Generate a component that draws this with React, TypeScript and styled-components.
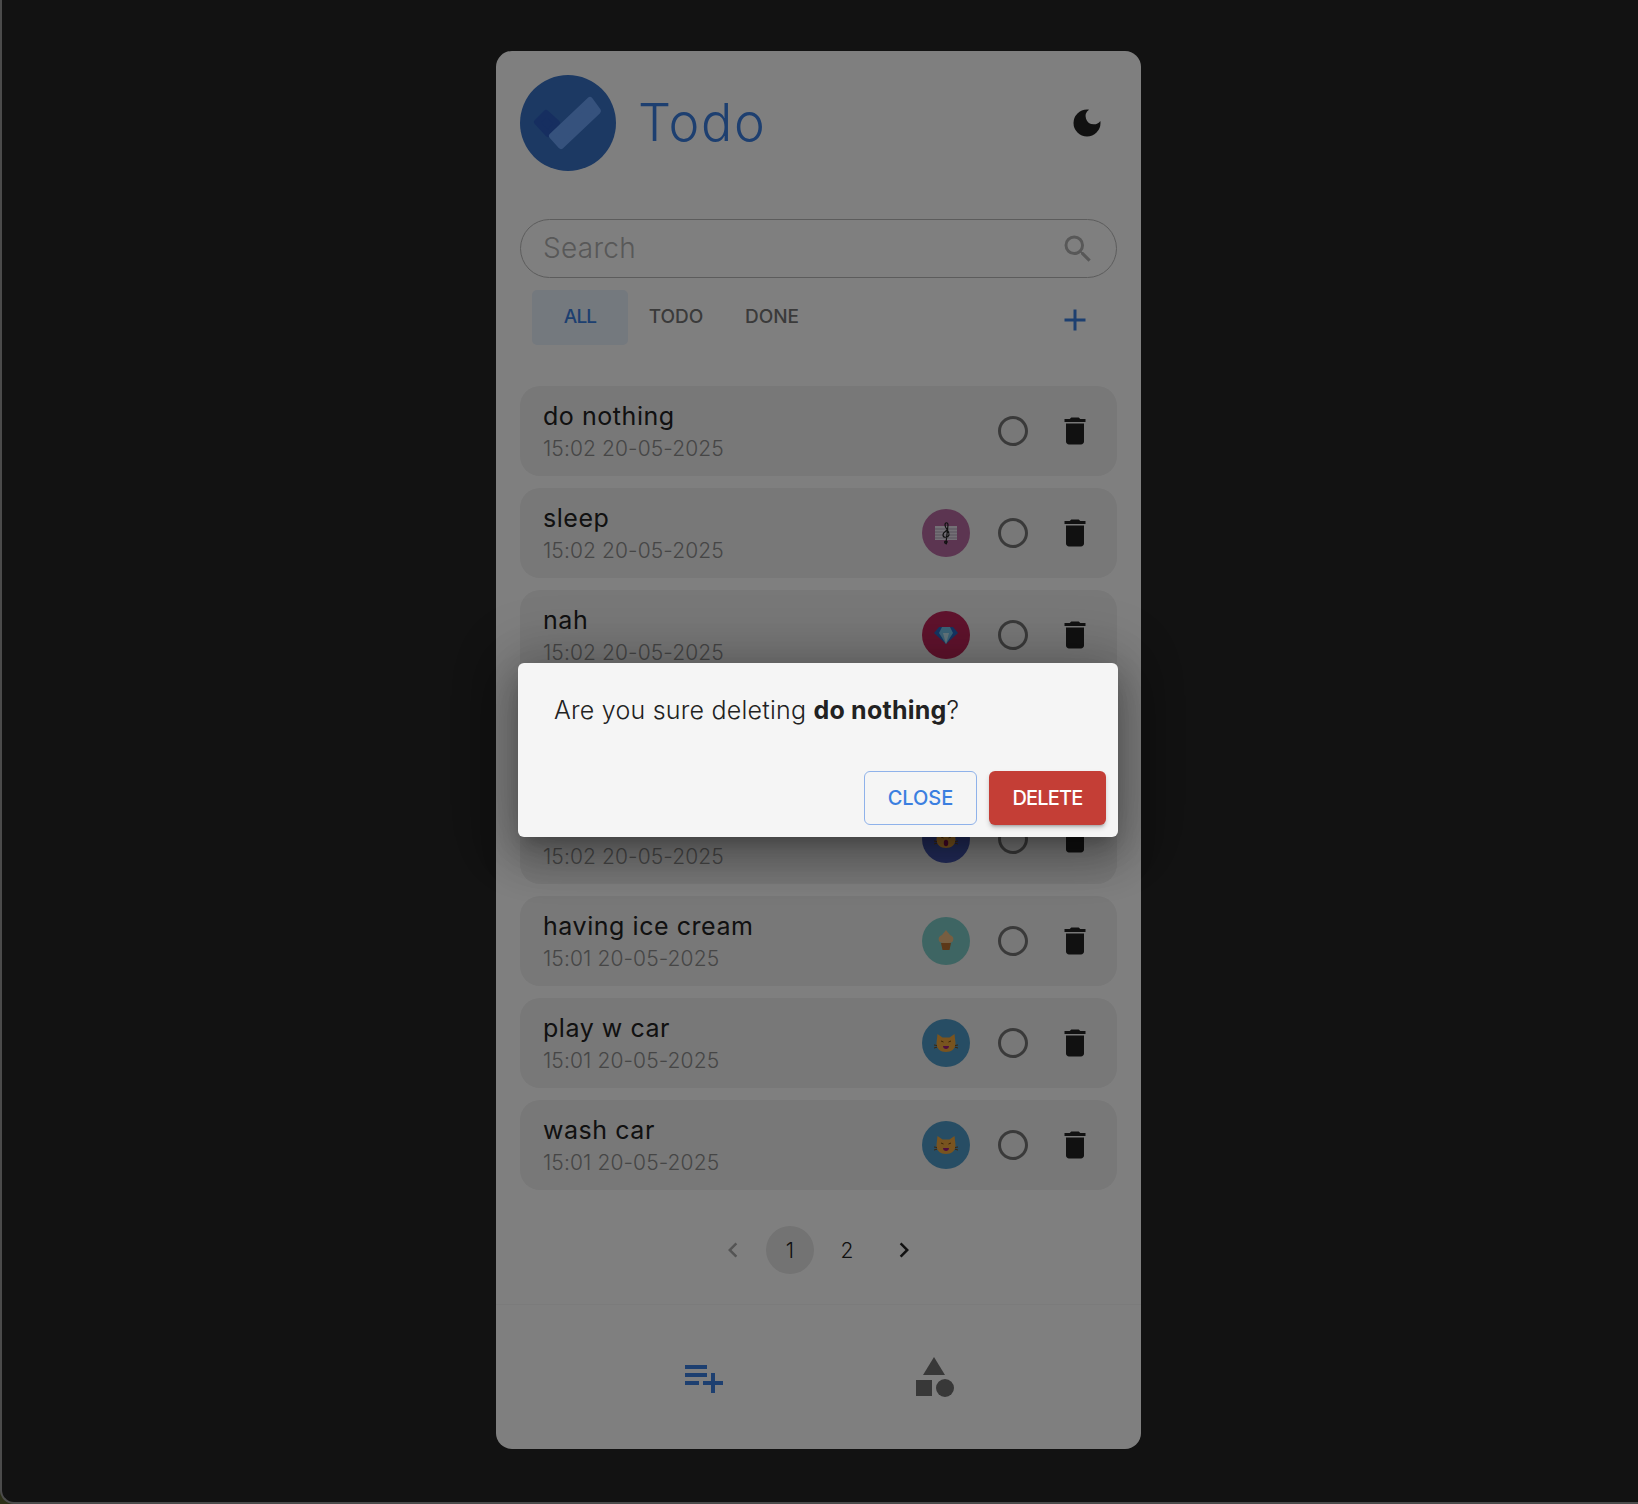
import React from 'react'
import styled, { createGlobalStyle } from 'styled-components'
import {
	MdAdd,
	MdCategory,
	MdChevronLeft,
	MdChevronRight,
	MdDarkMode,
	MdDelete,
	MdPlaylistAdd,
	MdRadioButtonUnchecked,
	MdSearch,
} from 'react-icons/md'

const PRIMARY = '#3b7fe0'

const GlobalStyle = createGlobalStyle`
	* {
		box-sizing: border-box;
	}

	body {
		margin: 0;
		background: #242424;
		font-family: Inter, "Open Sans", sans-serif;
	}
`

const Page = styled.div`
	position: relative;

	width: 1638px;
	height: 1504px;
	padding: 51px 1px 0 0;

	overflow: hidden;
	background: #5a6030;
`

const Desktop = styled.div`
	position: absolute;
	inset: 0;

	border-left: 2px solid #979797;
	border-bottom: 2px solid #979797;
	border-bottom-left-radius: 14px;

	background: #242424;
`

const Card = styled.main`
	position: relative;

	width: 645px;
	height: 1398px;
	margin: 0 auto;
	padding: 24px 24px 0;

	border-radius: 16px;

	display: flex;
	flex-direction: column;

	background: #fff;
`

const Header = styled.header`
	display: flex;
	align-items: center;
	gap: 22px;
`

const LogoMark = styled.svg`
	width: 96px;
	height: 96px;
	flex-shrink: 0;
`

const Title = styled.h1`
	margin: 0;
	flex: 1;

	font-size: 52px;
	font-weight: 350;
	line-height: 60px;
	letter-spacing: 1.6px;
	color: ${PRIMARY};
`

const IconButton = styled.button<{ $color?: string; $size?: number }>`
	width: ${props => props.$size ?? 36}px;
	height: ${props => props.$size ?? 36}px;
	padding: 0;
	border: none;
	flex-shrink: 0;

	display: flex;
	justify-content: center;
	align-items: center;

	background: none;
	color: ${props => props.$color ?? '#222'};
	font-size: 36px;
`

const ThemeToggle = styled(IconButton)`
	margin-right: 12px;
`

const SearchBox = styled.div`
	height: 59px;
	margin-top: 48px;
	padding: 0 20px 0 22px;

	border: 1.5px solid #b8b8b8;
	border-radius: 30px;

	display: flex;
	align-items: center;
`

const SearchText = styled.span`
	flex: 1;
	padding-bottom: 2px;

	font-size: 28px;
	font-weight: 300;
	letter-spacing: 0.3px;
	color: #b0b0b0;
`

const TabRow = styled.div`
	height: 55px;
	margin: 12px 24px 0 12px;

	display: flex;
	align-items: center;
`

const Tab = styled.div<{ $active?: boolean }>`
	width: 96px;
	height: 55px;

	border-radius: 5px;

	display: flex;
	justify-content: center;
	align-items: center;
	padding-bottom: 3px;

	font-size: 19px;
	font-weight: 500;
	letter-spacing: ${props => (props.$active ? '-0.8px' : '0')};
	background: ${props => (props.$active ? '#e9f2fd' : 'none')};
	color: ${props => (props.$active ? PRIMARY : '#757575')};
`

const TabAdd = styled(IconButton)`
	margin-left: auto;
	margin-top: 5px;
`

const List = styled.ul`
	margin: 41px 0 0;
	padding: 0;

	display: flex;
	flex-direction: column;
	gap: 12px;

	list-style: none;
`

const Row = styled.li`
	height: 90px;
	padding: 0 24px 0 23px;

	border-radius: 20px;

	display: flex;
	align-items: center;

	background: #f0f0f0;
`

const RowText = styled.div`
	flex: 1;
	padding-top: 2px;
`

const RowTitle = styled.div`
	height: 32px;

	font-size: 25px;
	font-weight: 400;
	line-height: 32px;
	letter-spacing: 0.55px;
	color: #222;
`

const RowDate = styled.div`
	height: 32px;
	padding-top: 1px;

	font-size: 21px;
	font-weight: 300;
	line-height: 31px;
	letter-spacing: 0.1px;
	color: #8c8c8c;
`

const Avatar = styled.div<{ $color: string }>`
	width: 48px;
	height: 48px;
	margin-right: 25px;

	border-radius: 50%;

	display: flex;
	justify-content: center;
	align-items: center;

	background: ${props => props.$color};
`

const RowAction = styled(IconButton)`
	& + & {
		margin-left: 26px;
	}
`

const Pagination = styled.nav`
	margin-top: 36px;

	display: flex;
	justify-content: center;
	gap: 9px;
`

const PageItem = styled.div<{ $active?: boolean; $muted?: boolean }>`
	width: 48px;
	height: 48px;

	border-radius: 50%;

	display: flex;
	justify-content: center;
	align-items: center;

	font-size: 21px;
	font-weight: 300;
	background: ${props => (props.$active ? '#e6e6e6' : 'none')};
	color: ${props => (props.$muted ? '#a8a8a8' : '#222')};
`

const BottomNav = styled.footer`
	height: 97px;
	margin: 30px -24px 0;
	padding-top: 48px;

	border-top: 1px solid #f6f6f6;

	display: flex;
	justify-content: center;
`

const BottomNavItem = styled.div<{ $color: string }>`
	width: 231px;

	display: flex;
	justify-content: center;

	font-size: 48px;
	line-height: 0;
	color: ${props => props.$color};
`

const Backdrop = styled.div`
	position: absolute;
	inset: 0;
	padding: 0 2px 4px 0;

	display: flex;
	justify-content: center;
	align-items: center;

	background: rgba(0, 0, 0, 0.5);
`

const Dialog = styled.div`
	width: 600px;
	height: 174px;

	border-radius: 6px;

	display: flex;
	flex-direction: column;
	justify-content: space-between;

	background: #f5f5f5;
	box-shadow:
		0 11px 15px -7px rgba(0, 0, 0, 0.2),
		0 24px 38px 3px rgba(0, 0, 0, 0.14),
		0 9px 46px 8px rgba(0, 0, 0, 0.12),
		0 0 60px 12px rgba(0, 0, 0, 0.16);
`

const DialogText = styled.p`
	margin: 0;
	padding: 28px 36px 0;

	font-size: 25px;
	font-weight: 300;
	line-height: 38px;
	letter-spacing: 0.22px;
	color: #222;

	b {
		font-weight: 700;
	}
`

const DialogActions = styled.div`
	padding: 12px;

	display: flex;
	justify-content: flex-end;
	gap: 12px;
`

const CloseButton = styled.button`
	width: 113px;
	height: 54px;

	border: 1px solid #8fb2ea;
	border-radius: 6px;

	background: none;
	color: ${PRIMARY};
	font: 500 20px Inter, sans-serif;
`

const DeleteButton = styled.button`
	width: 117px;
	height: 54px;

	border: none;
	border-radius: 6px;

	background: #c43e36;
	color: #fff;
	font: 500 20px Inter, sans-serif;
	letter-spacing: -0.8px;
	box-shadow: 0 3px 3px -2px rgba(0, 0, 0, 0.25), 0 3px 5px rgba(0, 0, 0, 0.16);
`

const Logo = () => (
	<LogoMark viewBox="0 0 96 96">
		<circle cx="48" cy="48" r="48" fill="#3872c6" />
		<polygon points="17,47 26,38 37,48 28,59" fill="#2c5cc0" stroke="#2c5cc0" strokeWidth="6" strokeLinejoin="round" />
		<polygon points="70,25 78,36 41,71 32,61" fill="#6ca4fa" stroke="#6ca4fa" strokeWidth="6" strokeLinejoin="round" />
	</LogoMark>
)

const Cat = ({ scream }: { scream?: boolean }) => (
	<svg width="24" height="24" viewBox="0 0 24 24">
		<path d="M3.5 3l5 3.5h7l5-3.5 1 9c0 6-4 9-9.500 9s-9.500-3-9.500-9z" fill="#f2a83e" />
		<path d="M7 10l2.500 1M17 10l-2.500 1M0 14l3 .5M24 14l-3 .5M0 17l3-.8M24 17l-3-.8" stroke="#7a4a14" strokeWidth="1" />
		{scream
			? <ellipse cx="12" cy="16" rx="2.200" ry="3.200" fill="#8a1050" />
			: <path d="M9 15h6c0 2-1.400 3-3 3s-3-1-3-3z" fill="#a01a80" />}
	</svg>
)

const IceCream = () => (
	<svg width="24" height="24" viewBox="0 0 24 24">
		<path d="M12 1c1 2 3 3 4 5 3 1 4 3 3 6-1 2-4 2-7 2s-6 0-7-2c-1-3 0-5 3-6 1-2 3-3 4-5z" fill="#eebc82" />
		<path d="M7 14h10l-1.500 7h-7z" fill="#b87030" />
	</svg>
)

const Gem = () => (
	<svg width="24" height="24" viewBox="0 0 24 24">
		<path d="M5 4h14l5 6-12 11L0 10z" fill="#2a6cc8" />
		<path d="M8 4h8l3 6-7 11-7-11z" fill="#78c8f0" />
		<path d="M9 10h6l-3 11z" fill="#c8ecf8" />
	</svg>
)

const Music = () => (
	<svg width="24" height="24" viewBox="0 0 24 24">
		<rect x="1" y="5" width="22" height="14" fill="#e8e0ec" />
		<path d="M1 8h22M1 11h22M1 14h22M1 17h22" stroke="#b0a4b8" strokeWidth="1" />
		<path d="M13 23c-3 0-3-3-1-3 2 0 1 2 0 2M12 22l2-18c0-3-3-3-3 0 0 4 5 6 4 10-1 3-6 3-6 0 0-3 4-4 5-6" fill="none" stroke="#222" strokeWidth="1.2" />
	</svg>
)

const todos = [
	{ title: 'do nothing', date: '15:02 20-05-2025' },
	{ title: 'sleep', date: '15:02 20-05-2025', color: '#b86aa2', emoji: <Music /> },
	{ title: 'nah', date: '15:02 20-05-2025', color: '#c0265a', emoji: <Gem /> },
	{ title: '', date: '' },
	{ title: '', date: '15:02 20-05-2025', color: '#4658b4', emoji: <Cat scream /> },
	{ title: 'having ice cream', date: '15:01 20-05-2025', color: '#7ccbc6', emoji: <IceCream /> },
	{ title: 'play w car', date: '15:01 20-05-2025', color: '#4f9bc8', emoji: <Cat /> },
	{ title: 'wash car', date: '15:01 20-05-2025', color: '#4f9bc8', emoji: <Cat /> },
]

const App: React.FC = () => {
	return (
		<Page>
			<GlobalStyle />
			<Desktop />
			<Card>
				<Header>
					<Logo />
					<Title>Todo</Title>
					<ThemeToggle><MdDarkMode /></ThemeToggle>
				</Header>
				<SearchBox>
					<SearchText>Search</SearchText>
					<IconButton $color="#b0b0b0"><MdSearch /></IconButton>
				</SearchBox>
				<TabRow>
					<Tab $active>ALL</Tab>
					<Tab>TODO</Tab>
					<Tab>DONE</Tab>
					<TabAdd $color={PRIMARY}><MdAdd /></TabAdd>
				</TabRow>
				<List>
					{todos.map((todo, index) => (
						<Row key={index}>
							<RowText>
								<RowTitle>{todo.title}</RowTitle>
								<RowDate>{todo.date}</RowDate>
							</RowText>
							{todo.color && <Avatar $color={todo.color}>{todo.emoji}</Avatar>}
							{todo.date && <RowAction $color="#757575"><MdRadioButtonUnchecked /></RowAction>}
							{todo.date && <RowAction><MdDelete /></RowAction>}
						</Row>
					))}
				</List>
				<Pagination>
					<PageItem $muted><MdChevronLeft size={30} /></PageItem>
					<PageItem $active>1</PageItem>
					<PageItem>2</PageItem>
					<PageItem><MdChevronRight size={30} /></PageItem>
				</Pagination>
				<BottomNav>
					<BottomNavItem $color={PRIMARY}><MdPlaylistAdd /></BottomNavItem>
					<BottomNavItem $color="#707070"><MdCategory /></BottomNavItem>
				</BottomNav>
			</Card>
			<Backdrop>
				<Dialog>
					<DialogText>Are you sure deleting <b>do nothing</b>?</DialogText>
					<DialogActions>
						<CloseButton>CLOSE</CloseButton>
						<DeleteButton>DELETE</DeleteButton>
					</DialogActions>
				</Dialog>
			</Backdrop>
		</Page>
	)
}

export default App
